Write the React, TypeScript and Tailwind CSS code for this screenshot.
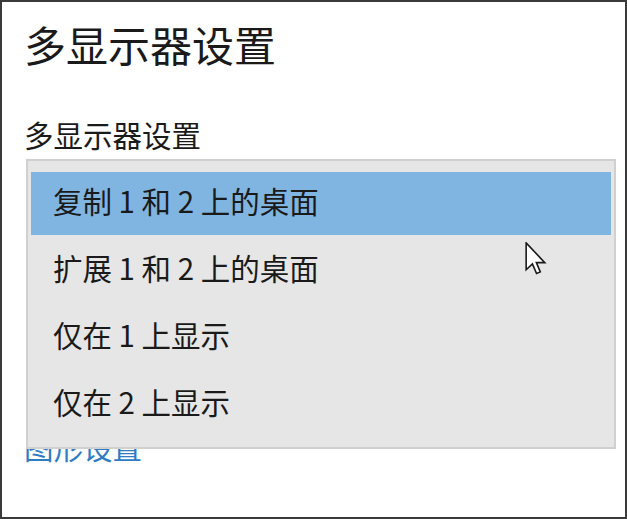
import React from "react";

const items = ["复制 1 和 2 上的桌面", "扩展 1 和 2 上的桌面", "仅在 1 上显示", "仅在 2 上显示"];

const Cursor: React.FC = () => (
  <svg
    className="absolute left-[522px] top-[240px]"
    width="24"
    height="34"
    viewBox="0 0 12 19"
  >
    <path
      d="M0.5 0.5 L0.5 15.5 L4 12.2 L6.3 17.6 L8.4 16.7 L6.2 11.5 L10.9 11.5 Z"
      fill="#ffffff"
      stroke="#1a1a1a"
      strokeWidth="0.9"
      strokeLinejoin="miter"
    />
  </svg>
);

const DisplayDropdown: React.FC = () => {
  return (
    <div className="absolute left-[24px] top-[157px] flex w-[590px] flex-col gap-[4px] border-2 border-[#d0d0d0] bg-[#e6e6e6] px-[3px] py-[11px]">
      {items.map((label, i) => (
        <div
          key={label}
          className={`flex h-[63px] items-center pb-[5px] pl-[22px] text-[29.5px] leading-none text-[#1a1a1a] ${
            i === 0 ? "bg-[#80b5e2]" : ""
          }`}
        >
          {label}
        </div>
      ))}
    </div>
  );
};

export default function App() {
  return (
    <div
      className="relative h-[519px] w-[627px] overflow-hidden border-2 border-[#3a3a3a] bg-white"
      style={{ fontFamily: '"Noto Sans CJK SC", "Noto Sans", sans-serif' }}
    >
      <div className="flex flex-col pl-[22px]">
        <h1 className="mt-[21px] text-[42px] font-normal leading-none text-[#1a1a1a]">
          多显示器设置
        </h1>
        <p className="mt-[55px] text-[29.5px] leading-none text-[#1a1a1a]">多显示器设置</p>
        <div className="h-[282px]" />
        <a className="text-[29.5px] leading-none text-[#2f7bc4]">图形设置</a>
      </div>
      <DisplayDropdown />
      <Cursor />
    </div>
  );
}
